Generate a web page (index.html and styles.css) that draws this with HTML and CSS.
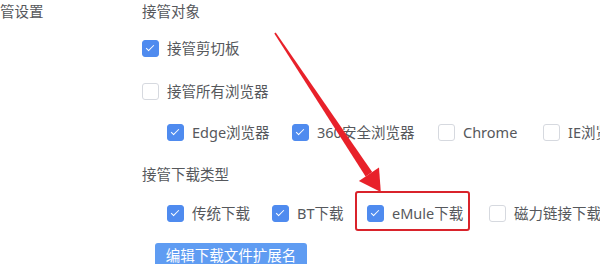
FILE: index.html
```html
<!DOCTYPE html>
<html lang="zh">
<head>
<meta charset="utf-8">
<link rel="stylesheet" href="styles.css">
</head>
<body>
<div class="page">
  <div class="side">管设置</div>
  <div class="main">
    <div class="title t1">接管对象</div>
    <div class="row r1">
      <label class="cb on"><span class="box"></span><span class="txt">接管剪切板</span></label>
    </div>
    <div class="row r2">
      <label class="cb"><span class="box"></span><span class="txt">接管所有浏览器</span></label>
    </div>
    <div class="row r3 sub">
      <label class="cb on w-edge"><span class="box"></span><span class="txt">Edge浏览器</span></label>
      <label class="cb on w-360"><span class="box"></span><span class="txt">360安全浏览器</span></label>
      <label class="cb w-chrome"><span class="box"></span><span class="txt">Chrome</span></label>
      <label class="cb"><span class="box"></span><span class="txt">IE浏览器</span></label>
    </div>
    <div class="title t2">接管下载类型</div>
    <div class="row r5 sub">
      <label class="cb on w-trad"><span class="box"></span><span class="txt">传统下载</span></label>
      <label class="cb on w-bt"><span class="box"></span><span class="txt">BT下载</span></label>
      <label class="cb on w-emule hl"><span class="box"></span><span class="txt">eMule下载</span><span class="mark"></span></label>
      <label class="cb"><span class="box"></span><span class="txt">磁力链接下载</span></label>
    </div>
    <div class="btnrow">
      <button class="btn">编辑下载文件扩展名</button>
    </div>
  </div>
  <svg class="arrow" width="600" height="264" viewBox="0 0 600 264">
    <polygon points="274.3,33.5 275.7,32.5 372.2,172.1 365.6,176.5" fill="#e8212a"/>
    <polygon points="358.9,181.0 379.0,167.6 380.8,192" fill="#e8212a"/>
  </svg>
</div>
</body>
</html>
```
FILE: styles.css
```css
html, body {
  margin: 0;
  padding: 0;
  background: #ffffff;
}
body {
  width: 600px;
  height: 264px;
  overflow: hidden;
  font-family: "Noto Sans", "Noto Sans CJK SC", sans-serif;
  font-size: 14.5px;
  color: #56585c;
}
.page {
  position: relative;
  display: flex;
  width: 600px;
  height: 264px;
}
.side {
  width: 142px;
  flex: none;
  line-height: 20px;
  margin-top: 1px;
}
.main {
  display: flex;
  flex-direction: column;
  flex: 1;
  min-width: 0;
}
.title {
  height: 20px;
  line-height: 20px;
  white-space: nowrap;
}
.t1 { margin-top: 1px; }
.t2 { margin-top: 22px; }
.row {
  display: flex;
  align-items: center;
  height: 20px;
  white-space: nowrap;
  gap: 24px;
}
.r1 { margin-top: 17px; }
.r2 { margin-top: 23px; }
.r3 { margin-top: 21px; }
.r5 { margin-top: 19px; }
.sub { padding-left: 25px; }
.cb {
  position: relative;
  display: flex;
  align-items: center;
  gap: 8px;
  flex: none;
}
.box {
  position: relative;
  width: 15px;
  height: 15px;
  border: 1px solid #d6d9df;
  border-radius: 3px;
  background: #fff;
  flex: none;
}
.cb.on .box {
  background: #4f8bef;
  border-color: #4f8bef;
}
.cb.on .box::after {
  content: "";
  position: absolute;
  left: 5px;
  top: 2px;
  width: 3px;
  height: 7px;
  border-right: 1.6px solid #fff;
  border-bottom: 1.6px solid #fff;
  transform: rotate(45deg);
}
.txt { line-height: 20px; }
.w-edge { width: 101px; }
.w-360 { width: 122px; }
.w-chrome { width: 81px; }
.w-trad { width: 81px; }
.w-bt { width: 71px; }
.w-emule { width: 98px; }
.mark {
  position: absolute;
  left: -12px;
  top: -12px;
  width: 111px;
  height: 36px;
  border: 2px solid #d9232b;
  border-radius: 3px;
}
.btnrow {
  margin-top: 20px;
  padding-left: 13px;
}
.btn {
  display: block;
  width: 152px;
  height: 34px;
  border: none;
  border-radius: 3px;
  background: #5f9cf2;
  color: #ffffff;
  font-family: "Noto Sans", "Noto Sans CJK SC", sans-serif;
  font-size: 14.5px;
  padding: 0 0 12px;
  text-align: center;
}
.arrow {
  position: absolute;
  left: 0;
  top: 0;
  pointer-events: none;
}
```
